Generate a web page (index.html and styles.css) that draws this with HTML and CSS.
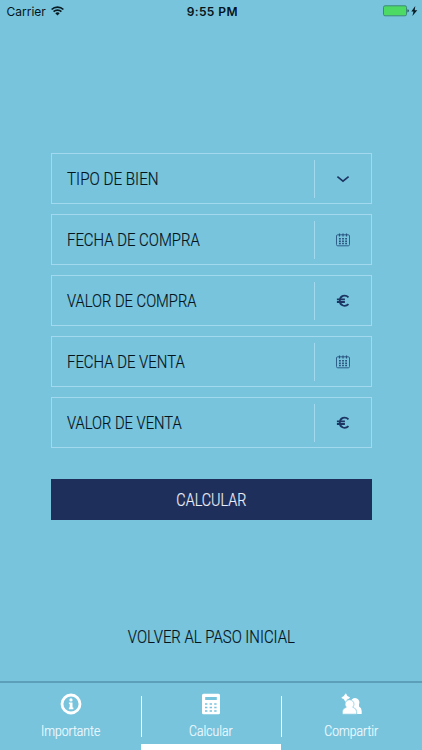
FILE: index.html
```html
<!DOCTYPE html>
<html lang="es">
<head>
  <meta charset="UTF-8">
  <meta name="viewport" content="width=device-width, initial-scale=1.0">
  <title>Calcular</title>
  <link rel="stylesheet" href="styles.css">
</head>
<body>

  <header class="status-bar">
    <div class="carrier">
      <span>Carrier</span>
      <svg class="wifi" width="13" height="10" viewBox="0 0 13 10">
        <path d="M.6 3.5a8.300 8.300 0 0 1 11.800 0M2.600 5.700a5.500 5.500 0 0 1 7.800 0" fill="none" stroke="#081c24" stroke-width="1.7"/>
        <path d="M4.300 7.300a3.100 3.100 0 0 1 4.400 0L6.500 9.600z" fill="#081c24"/>
      </svg>
    </div>
    <div class="time">9:55 PM</div>
    <div class="power">
      <svg width="35" height="12" viewBox="0 0 35 12">
        <rect x=".5" y=".8" width="23" height="10" rx="1.5" fill="#4cd964" stroke="#3c8b79"/>
        <path d="M24.5 4.200q1.300.3 1.300 1.600t-1.300 1.600z" fill="#173f48"/>
        <path d="M32.300 1 28.300 6.600h2.200L29.400 11 34.300 5.200h-2.600z" fill="#081c24"/>
      </svg>
    </div>
  </header>

  <main class="content">
    <form class="form">
      <div class="field">
        <label class="field-name"><span class="narrow asset-type">TIPO DE BIEN</span></label>
        <div class="field-icon">
          <svg width="14" height="14" viewBox="0 0 14 14"><path d="M1.400 4.600 7 9.100l5.600-4.500" fill="none" stroke="#1d3563" stroke-width="1.700"/></svg>
        </div>
      </div>
      <div class="field">
        <label class="field-name"><span class="narrow">FECHA DE COMPRA</span></label>
        <div class="field-icon">
          <svg width="14" height="14" viewBox="0 0 14 14">
            <rect x=".5" y="1.800" width="13" height="11" rx="1.200" fill="none" stroke="#2e608a"/>
            <path d="M3.500.5v3M7 .5v3M10.500.5v3" stroke="#28517c" stroke-width="1.200"/>
            <path d="M3 5.800h8M3 8.200h8M3 10.600h8" stroke="#28517c" stroke-width="1.500" stroke-dasharray="1.800 1.300"/>
          </svg>
        </div>
      </div>
      <div class="field">
        <label class="field-name"><span class="narrow value">VALOR DE COMPRA</span></label>
        <div class="field-icon">
          <svg width="14" height="14" viewBox="0 0 14 14"><path d="M12.500 3.300C9.300.2 3.800 1.500 3.800 6.700s5.500 6.500 8.700 3.400M.9 5.400h8M.9 8h8" fill="none" stroke="#1d3563" stroke-width="1.800"/></svg>
        </div>
      </div>
      <div class="field">
        <label class="field-name"><span class="narrow">FECHA DE VENTA</span></label>
        <div class="field-icon">
          <svg width="14" height="14" viewBox="0 0 14 14">
            <rect x=".5" y="1.800" width="13" height="11" rx="1.200" fill="none" stroke="#2e608a"/>
            <path d="M3.500.5v3M7 .5v3M10.500.5v3" stroke="#28517c" stroke-width="1.200"/>
            <path d="M3 5.800h8M3 8.200h8M3 10.600h8" stroke="#28517c" stroke-width="1.500" stroke-dasharray="1.800 1.300"/>
          </svg>
        </div>
      </div>
      <div class="field">
        <label class="field-name"><span class="narrow value">VALOR DE VENTA</span></label>
        <div class="field-icon">
          <svg width="14" height="14" viewBox="0 0 14 14"><path d="M12.500 3.300C9.300.2 3.800 1.500 3.800 6.700s5.500 6.500 8.700 3.400M.9 5.400h8M.9 8h8" fill="none" stroke="#1d3563" stroke-width="1.800"/></svg>
        </div>
      </div>
      <button type="button" class="submit"><span class="narrow">CALCULAR</span></button>
    </form>
    <a class="back"><span class="narrow">VOLVER AL PASO INICIAL</span></a>
  </main>

  <nav class="tabs">
    <a class="tab">
      <svg width="22" height="22" viewBox="0 0 22 22">
        <circle cx="11" cy="11" r="9" fill="none" stroke="#fff" stroke-width="2.800"/>
        <circle cx="11" cy="6.900" r="1.600" fill="#fff"/>
        <path d="M8.900 9.400h3.600v5.200h.9v1.600H8.900v-1.600h.8v-3.600h-.8z" fill="#fff"/>
      </svg>
      <span class="narrow">Importante</span>
    </a>
    <a class="tab active">
      <svg width="22" height="22" viewBox="0 0 22 22">
        <rect x="2" y=".8" width="18" height="20.400" rx="1.500" fill="#fff"/>
        <path d="M5.200 4h11.600v3H5.200z" fill="#78c4dd"/>
        <path d="M5 11h12M5 14.500h12M5 18h12" stroke="#78c4dd" stroke-width="1.500" stroke-dasharray="2.400 2.200"/>
      </svg>
      <span class="narrow">Calcular</span>
    </a>
    <a class="tab">
      <svg width="22" height="22" viewBox="0 0 22 22">
        <path d="M4.700.8 6.100 3.300 8.600 4.700 6.100 6.100 4.700 8.600 3.300 6.100.8 4.700 3.300 3.300z" fill="#fff" stroke="#fff" stroke-width=".9"/>
        <path d="M10 7.500a4.200 4.200 0 1 1 8 3.800v2.200q2.700 1.300 2.700 4.500v3h-7z" fill="#fff"/>
        <path d="M1.300 21.200v-2.500q0-3.300 4-4.500-1.300-1.300-1.300-3a4.500 4.500 0 0 1 9 0q0 1.800-1.300 3 4 1.200 4 4.500v2.500z" fill="#fff" stroke="#78c4dd" stroke-width=".7"/>
      </svg>
      <span class="narrow">Compartir</span>
    </a>
  </nav>

</body>
</html>
```
FILE: styles.css
```css
body {
  margin: 0;
  height: 750px;
  display: flex;
  flex-direction: column;
  overflow: hidden;
  background-color: #78c4dd;
  color: #06141b;
  font-family: Roboto, "Liberation Sans", sans-serif;
}

svg {
  display: block;
}

.status-bar {
  display: grid;
  grid-template-columns: 1fr auto 1fr;
  align-items: center;
  height: 22px;
  padding: 0 4px 0 6.5px;
  font-family: Inter, sans-serif;
  font-size: 12px;
}

.carrier {
  display: flex;
  align-items: center;
  gap: 5px;
}

.time {
  font-weight: 600;
  letter-spacing: 0.4px;
}

.power {
  display: flex;
  justify-content: flex-end;
}

.content {
  flex: 1;
  display: flex;
  flex-direction: column;
  align-items: center;
  padding-top: 131px;
}

.form {
  display: flex;
  flex-direction: column;
  gap: 10px;
  width: 321px;
}

.field {
  display: flex;
  align-items: center;
  box-sizing: border-box;
  height: 51px;
  border: 1px solid #a2d9ee;
}

.field-name {
  flex: 1;
  padding-left: 15px;
}

.field-icon {
  display: flex;
  align-items: center;
  justify-content: center;
  width: 56px;
  height: 38px;
  border-left: 1px solid #a2d9ee;
}

/* Condensed lettering */
.narrow {
  display: inline-block;
  font-size: 19px;
  font-weight: 300;
  line-height: 24px;
  white-space: nowrap;
  transform: scaleX(0.785);
  transform-origin: left;
  -webkit-text-stroke: 0.2px;
}

.asset-type {
  transform: scaleX(0.8);
}

.value {
  transform: scaleX(0.775);
}

.submit {
  height: 41px;
  margin-top: 21px;
  padding: 0;
  border: 0;
  background-color: #1e2f5b;
  color: #e9edf7;
  font-family: inherit;
}

.submit .narrow,
.back .narrow,
.tab .narrow {
  transform-origin: center;
}

.submit .narrow {
  transform: scaleX(0.755);
}

.back {
  margin-top: 105px;
}

.tabs {
  display: grid;
  grid-template-columns: 141px 140px 141px;
  height: 67px;
  border-top: 2px solid #5b9fb9;
  color: #effaff;
}

.tab {
  position: relative;
  display: flex;
  flex-direction: column;
  align-items: center;
  padding-top: 10px;
}

.tab .narrow {
  margin-top: 4px;
  font-size: 15px;
  transform: scaleX(0.81);
}

/* Dividers between tabs */
.tab + .tab::before {
  content: "";
  position: absolute;
  left: 0;
  top: 13px;
  width: 1px;
  height: 41px;
  background-color: #fff;
}

.active::after {
  content: "";
  position: absolute;
  left: 0;
  right: 0;
  bottom: 0;
  height: 6px;
  background-color: #fff;
}
```
